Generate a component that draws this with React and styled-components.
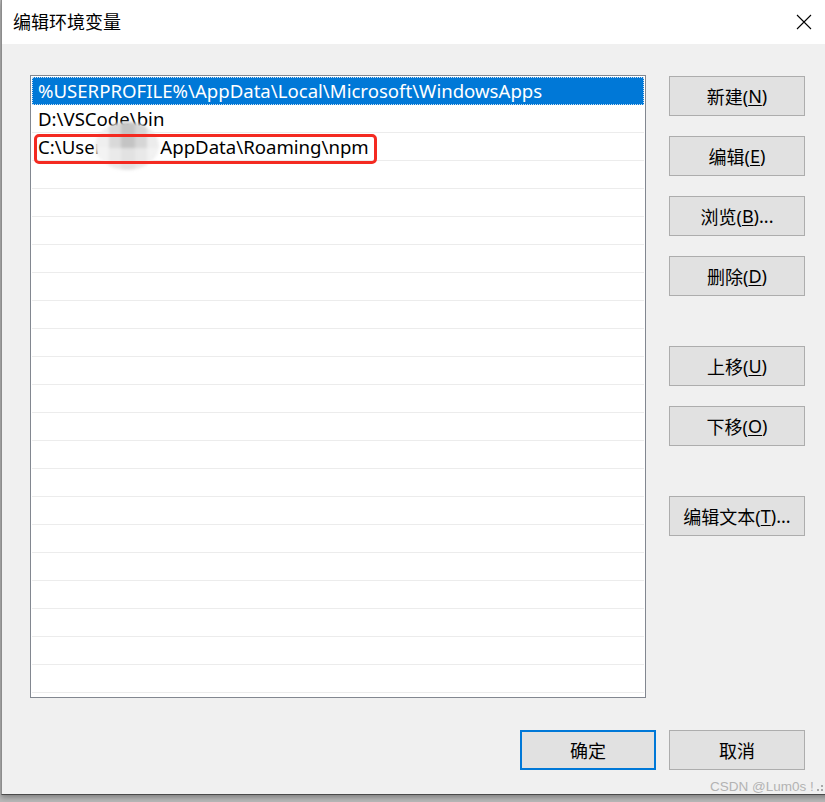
import React from 'react';
import styled, { createGlobalStyle } from 'styled-components';

const GlobalStyle = createGlobalStyle`
  html, body {
    margin: 0;
    padding: 0;
    background: #b9b9b9;
  }
  body {
    width: 825px;
    height: 802px;
    overflow: hidden;
    font-family: "Noto Sans", "Noto Sans CJK SC", sans-serif;
  }
`;

const Window = styled.div`
  position: relative;
  margin-left: 1px;
  width: 840px;
  height: 795px;
  border-left: 1px solid #8c8c8c;
  border-bottom: 1px solid #4a4a4a;
  box-sizing: border-box;
  display: flex;
  flex-direction: column;
  background: #f0f0f0;
  box-shadow: 0 2px 6px rgba(0, 0, 0, 0.35);
`;

const TitleBar = styled.div`
  height: 44px;
  flex: none;
  background: #fff;
  display: flex;
  align-items: center;
  justify-content: space-between;
  padding: 0 29px 0 11px;
`;

const Title = styled.span`
  font-family: "Noto Sans CJK SC", sans-serif;
  font-size: 18px;
  color: #000;
  margin-top: -2px;
`;

const Close = styled.svg`
  width: 16px;
  height: 16px;
  margin-top: -1px;
`;

const Body = styled.div`
  flex: 1;
  display: flex;
  flex-direction: column;
  padding: 31px 0 0 28px;
`;

const Main = styled.div`
  display: grid;
  grid-template-columns: 616px 136px;
  column-gap: 23px;
`;

const List = styled.div`
  height: 623px;
  box-sizing: border-box;
  border: 1px solid #828790;
  background: #fff;
  padding: 1px;
  overflow: hidden;
`;

const Row = styled.div`
  position: relative;
  height: 28px;
  box-sizing: border-box;
  border-bottom: 1px solid ${p => (p.$selected ? '#0078d7' : '#ececec')};
  background: ${p => (p.$selected ? '#0078d7' : '#fff')};
  color: ${p => (p.$selected ? '#fff' : '#000')};
  outline: ${p => (p.$selected ? '1px dotted #c8def2' : 'none')};
  outline-offset: -1px;
  padding-left: 6px;
  font-size: 18.6px;
  line-height: 27px;
  white-space: nowrap;
`;

// hidden part of the user name
const Mosaic = styled.span`
  display: inline-block;
  width: 58px;
  height: 27px;
  vertical-align: top;
`;

const Blur = styled.span`
  position: absolute;
  z-index: 1;
  left: 63px;
  top: -11px;
  width: 64px;
  height: 48px;
  border-radius: 50%;
  background:
    linear-gradient(180deg, rgba(255,255,255,0) 0 55%, rgba(245,245,245,0.6) 55% 100%),
    linear-gradient(90deg, #efefef 0 22%, #d9d9d9 22% 40%, #c4c4c4 40% 62%, #d6d6d6 62% 82%, #ececec 82% 100%);
  filter: blur(1.5px);
`;

const Annotation = styled.span`
  position: absolute;
  z-index: 2;
  left: 2px;
  top: 1px;
  width: 343px;
  height: 30px;
  box-sizing: border-box;
  border: 3.5px solid #f42a21;
  border-radius: 5px;
`;

const Side = styled.div`
  display: flex;
  flex-direction: column;
  padding-top: 1px;
`;

const Button = styled.button`
  width: 136px;
  height: 40px;
  margin-top: ${p => p.$gap || 0}px;
  box-sizing: border-box;
  background: #e1e1e1;
  border: ${p => (p.$primary ? '2px solid #0078d7' : '1px solid #adadad')};
  font-family: "Noto Sans", "Noto Sans CJK SC", sans-serif;
  font-size: 18px;
  color: #000;
  padding: 0;
  display: flex;
  align-items: center;
  justify-content: center;
`;

const Key = styled.span`
  text-decoration: underline;
  text-underline-offset: 2px;
`;

const Footer = styled.div`
  display: flex;
  justify-content: flex-end;
  gap: 13px;
  padding-top: 32px;
  width: 775px;
`;

const Watermark = styled.div`
  position: absolute;
  left: 708px;
  top: 779px;
  display: flex;
  align-items: flex-end;
  gap: 2px;
  font-family: "Liberation Sans", sans-serif;
  font-size: 13.5px;
  color: #b3b3b3;
`;

const Grip = styled.svg`
  width: 12px;
  height: 12px;
  margin-bottom: 2px;
`;

const sideButtons = [
  { label: '新建', key: 'N', gap: 0 },
  { label: '编辑', key: 'E', gap: 20 },
  { label: '浏览', key: 'B', gap: 20, dots: true },
  { label: '删除', key: 'D', gap: 20 },
  { label: '上移', key: 'U', gap: 50 },
  { label: '下移', key: 'O', gap: 20 },
  { label: '编辑文本', key: 'T', gap: 50, dots: true },
];

const gripDots = [[9, 1], [5, 5], [9, 5], [1, 9], [5, 9], [9, 9]];

export default function App() {
  const empty = Array.from({ length: 20 });
  return (
    <>
      <GlobalStyle />
      <Window>
        <TitleBar>
          <Title>编辑环境变量</Title>
          <Close viewBox="0 0 16 16">
            <path d="M1 1 L15 15 M15 1 L1 15" stroke="#000" strokeWidth="1.1" fill="none" />
          </Close>
        </TitleBar>
        <Body>
          <Main>
            <List>
              <Row $selected>%USERPROFILE%\AppData\Local\Microsoft\WindowsApps</Row>
              <Row>D:\VSCode\bin</Row>
              <Row>
                C:\User<Mosaic />AppData\Roaming\npm
                <Blur />
                <Annotation />
              </Row>
              {empty.map((_, i) => (
                <Row key={i} />
              ))}
            </List>
            <Side>
              {sideButtons.map(b => (
                <Button key={b.key} $gap={b.gap}>
                  {b.label}(<Key>{b.key}</Key>){b.dots ? '...' : ''}
                </Button>
              ))}
            </Side>
          </Main>
          <Footer>
            <Button $primary>确定</Button>
            <Button>取消</Button>
          </Footer>
        </Body>
        <Watermark>
          CSDN @Lum0s !
          <Grip viewBox="0 0 12 12">
            {gripDots.map(([x, y]) => (
              <rect key={`${x}-${y}`} x={x} y={y} width="2" height="2" fill="#a8a8a8" />
            ))}
          </Grip>
        </Watermark>
      </Window>
    </>
  );
}
